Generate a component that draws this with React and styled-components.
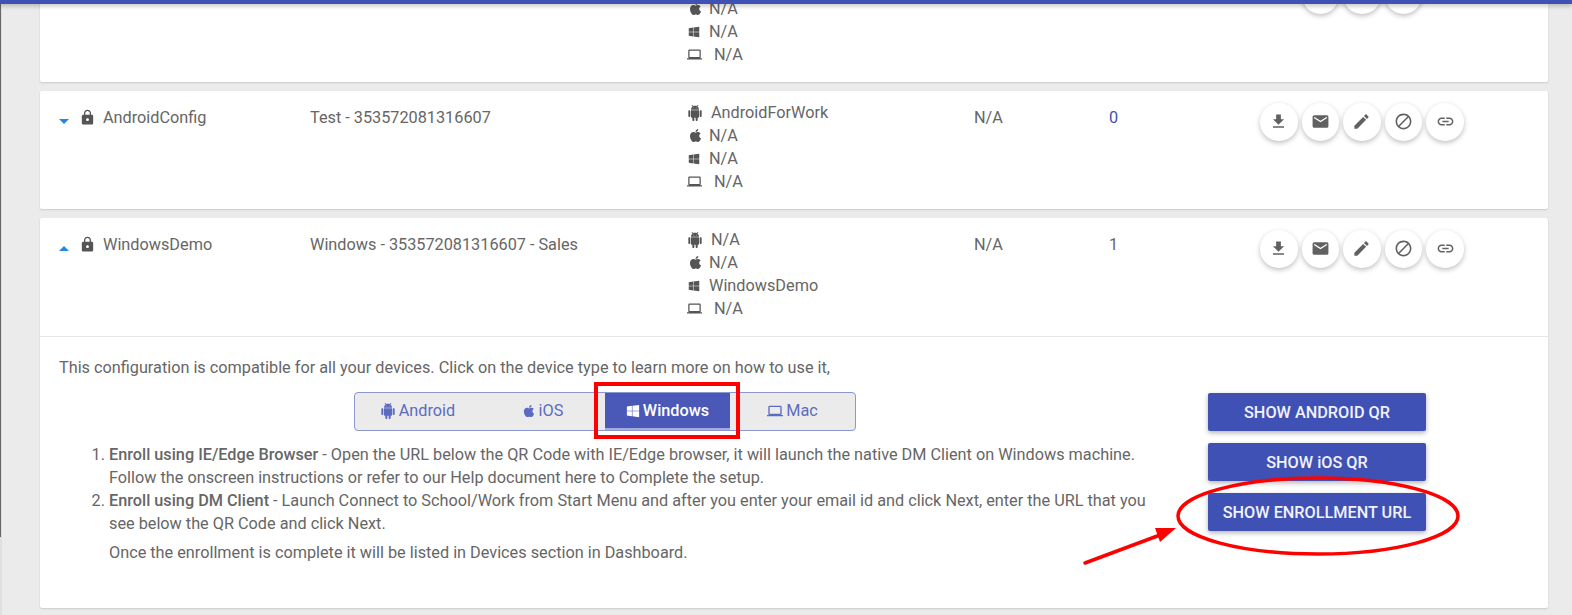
import React from 'react';
import styled, { createGlobalStyle } from 'styled-components';
import {
  MdArrowDropDown,
  MdArrowDropUp,
  MdBlock,
  MdEdit,
  MdEmail,
  MdFileDownload,
  MdLaptop,
  MdLink,
  MdLock,
} from 'react-icons/md';
import { FaApple, FaWindows } from 'react-icons/fa';

const GlobalStyle = createGlobalStyle`
  html, body {
    margin: 0;
    padding: 0;
    height: 615px;
    overflow: hidden;
    background: #ebebeb;
    font-family: 'Roboto', 'Liberation Sans', sans-serif;
    color: #666;
  }
`;

const Page = styled.div`
  position: relative;
  width: 1572px;
  height: 615px;
  overflow: hidden;
  background: #ebebeb;
`;

const TopBar = styled.div`
  position: absolute;
  top: 0;
  left: 0;
  right: 0;
  height: 4px;
  background: #3f51b5;
  box-shadow: 0 2px 4px rgba(0, 0, 0, 0.25);
  z-index: 3;
`;

const EdgeLine = styled.div`
  position: absolute;
  top: 0;
  left: 0;
  width: 1px;
  height: 615px;
  background: linear-gradient(#666 537px, #e0e0e0 537px);
  box-shadow: 1px 0 0 rgba(0, 0, 0, 0.05);
  z-index: 2;
`;

const List = styled.div`
  display: flex;
  flex-direction: column;
  gap: 9px;
  margin: -36px 24px 0 40px;
`;

const Card = styled.div`
  background: #fff;
  border-radius: 2px;
  box-shadow: 0 1px 2px rgba(0, 0, 0, 0.14);
`;

const Row = styled.div`
  display: grid;
  grid-template-columns: 252px 376px 288px 135px 151px auto;
  height: 118px;
  box-sizing: border-box;
  padding: 12px 0 0 18px;
  font-size: 16.25px;
  line-height: 23px;
`;

const NameCell = styled.div`
  display: flex;
  align-items: flex-start;
  height: 23px;
  margin-top: 3px;
`;

const Caret = styled.span`
  display: flex;
  width: 12px;
  height: 24px;
  color: #1e88e5;
  font-size: 24px;
  svg {
    flex: none;
    margin-left: -6px;
    margin-top: ${(p) => (p.$open ? '4px' : '3px')};
  }
`;

const LockIcon = styled(MdLock)`
  flex: none;
  font-size: 17px;
  margin: 3px 0 0 9px;
  color: #555;
`;

const Name = styled.span`
  margin-left: 7px;
`;

const TextCell = styled.div`
  margin-top: 3px;
`;

const CountCell = styled(TextCell)`
  color: ${(p) => (p.$link ? '#3f51b5' : '#666')};
`;

const Platforms = styled.div`
  display: flex;
  flex-direction: column;
  margin-top: -2px;
`;

const Platform = styled.div`
  display: flex;
  align-items: center;
  height: 23px;
  color: #666;
  gap: ${(p) => p.$gap}px;
  padding-left: ${(p) => p.$inset}px;
  svg {
    flex: none;
    fill: #555;
    color: #555;
    font-size: ${(p) => p.$size}px;
  }
`;

const Actions = styled.div`
  display: flex;
  gap: 4px;
  height: 38px;
`;

const RoundButton = styled.button`
  display: flex;
  align-items: center;
  justify-content: center;
  width: 37.6px;
  height: 37.6px;
  padding: 0;
  border: 0;
  border-radius: 50%;
  background: #fff;
  color: #616161;
  font-size: 19px;
  box-shadow: 0 2px 5px rgba(0, 0, 0, 0.25);
  visibility: ${(p) => (p.$hidden ? 'hidden' : 'visible')};
`;

const Divider = styled.div`
  height: 1px;
  background: #e6e6e6;
`;

const Detail = styled.div`
  display: flex;
  height: 271px;
  box-sizing: border-box;
  padding: 19px 0 0 19px;
`;

const DetailMain = styled.div`
  width: 1100px;
  font-size: 16.25px;
  line-height: 23px;
`;

const Intro = styled.p`
  margin: 0;
`;

const TabStrip = styled.div`
  display: flex;
  width: 502px;
  height: 39px;
  box-sizing: border-box;
  margin: 13px 0 0 295px;
  background: #ebebeb;
  border: 1px solid #8c97d0;
  border-radius: 4px;
`;

const Tab = styled.div`
  display: flex;
  align-items: center;
  justify-content: center;
  gap: 3px;
  width: 125px;
  background: ${(p) => (p.$active ? '#4a58b7' : 'transparent')};
  border-bottom: 2px solid ${(p) => (p.$active ? '#a3abdc' : 'transparent')};
  color: ${(p) => (p.$active ? '#fff' : '#5c6bc0')};
  font-size: 16.25px;
  font-weight: ${(p) => (p.$active ? 500 : 400)};
  svg {
    flex: none;
    fill: currentColor;
  }
`;

const Steps = styled.ol`
  margin: 12px 0 0;
  padding-left: 50px;
  b {
    font-weight: 500;
  }
`;

const Note = styled.p`
  margin: 6px 0 0 50px;
`;

const ButtonColumn = styled.div`
  display: flex;
  flex-direction: column;
  gap: 12px;
  width: 218px;
  margin: 37px 0 0 49px;
`;

const PrimaryButton = styled.button`
  height: 38px;
  padding: 0;
  border: 0;
  border-radius: 2px;
  background: #3f51b5;
  color: #f1f2fb;
  font: 500 16.25px 'Roboto', sans-serif;
  box-shadow: 0 2px 5px rgba(0, 0, 0, 0.3);
`;

const Annotations = styled.svg`
  position: absolute;
  inset: 0;
  z-index: 2;
  pointer-events: none;
`;

const AndroidIcon = ({ size = '1em' }) => (
  <svg width={size} height={size} viewBox="0 0 24 24">
    <path d="M6 18c0 .55.45 1 1 1h1v3.5c0 .83.67 1.5 1.5 1.5s1.5-.67 1.5-1.5V19h2v3.5c0 .83.67 1.5 1.5 1.5s1.5-.67 1.5-1.5V19h1c.55 0 1-.45 1-1V8H6v10zM3.5 8C2.67 8 2 8.67 2 9.5v7c0 .83.67 1.5 1.5 1.5S5 17.33 5 16.5v-7C5 8.67 4.33 8 3.5 8zm17 0c-.83 0-1.5.67-1.5 1.5v7c0 .83.67 1.5 1.5 1.5s1.5-.67 1.5-1.5v-7c0-.83-.67-1.5-1.5-1.5zm-4.97-5.84l1.3-1.3c.2-.2.2-.51 0-.71-.2-.2-.51-.2-.71 0l-1.48 1.48C13.85 1.23 12.95 1 12 1c-.96 0-1.86.23-2.66.63L7.85.15c-.2-.2-.51-.2-.71 0-.2.2-.2.51 0 .71l1.31 1.31C6.97 3.26 6 5.01 6 7h12c0-1.99-.97-3.75-2.47-4.84zM10 5H9V4h1v1zm5 0h-1V4h1v1z" />
  </svg>
);

const actionIcons = [MdFileDownload, MdEmail, MdEdit, MdBlock, MdLink];

const ActionGroup = ({ middleOnly }) => (
  <Actions>
    {actionIcons.map((Icon, i) => (
      <RoundButton key={i} $hidden={middleOnly && (i === 0 || i === 4)}>
        <Icon />
      </RoundButton>
    ))}
  </Actions>
);

const PlatformList = ({ android, ios, windows, mac }) => (
  <Platforms>
    <Platform $inset={1} $gap={8} $size={16}><AndroidIcon />{android}</Platform>
    <Platform $inset={2} $gap={6} $size={15}><FaApple />{ios}</Platform>
    <Platform $inset={2} $gap={9} $size={12}><FaWindows />{windows}</Platform>
    <Platform $inset={1} $gap={12} $size={15}><MdLaptop />{mac}</Platform>
  </Platforms>
);

const ConfigRow = ({ open, name, title, platforms, policy, count, link, middleOnly }) => (
  <Row>
    <NameCell>
      <Caret $open={open}>{open ? <MdArrowDropUp /> : <MdArrowDropDown />}</Caret>
      <LockIcon />
      <Name>{name}</Name>
    </NameCell>
    <TextCell>{title}</TextCell>
    <PlatformList {...platforms} />
    <TextCell>{policy}</TextCell>
    <CountCell $link={link}>{count}</CountCell>
    <ActionGroup middleOnly={middleOnly} />
  </Row>
);

export default function App() {
  return (
    <Page>
      <GlobalStyle />
      <TopBar />
      <EdgeLine />
      <List>
        <Card>
          <ConfigRow
            middleOnly
            platforms={{ android: 'N/A', ios: 'N/A', windows: 'N/A', mac: 'N/A' }}
          />
        </Card>
        <Card>
          <ConfigRow
            name="AndroidConfig"
            title="Test - 353572081316607"
            platforms={{ android: 'AndroidForWork', ios: 'N/A', windows: 'N/A', mac: 'N/A' }}
            policy="N/A"
            count="0"
            link
          />
        </Card>
        <Card>
          <ConfigRow
            open
            name="WindowsDemo"
            title="Windows - 353572081316607 - Sales"
            platforms={{ android: 'N/A', ios: 'N/A', windows: 'WindowsDemo', mac: 'N/A' }}
            policy="N/A"
            count="1"
          />
          <Divider />
          <Detail>
            <DetailMain>
              <Intro>
                This configuration is compatible for all your devices. Click on the device type to learn more on how to use it,
              </Intro>
              <TabStrip>
                <Tab><AndroidIcon size={16} />Android</Tab>
                <Tab><FaApple size={14} />iOS</Tab>
                <Tab $active><FaWindows size={14} />Windows</Tab>
                <Tab><MdLaptop size={16} />Mac</Tab>
              </TabStrip>
              <Steps>
                <li>
                  <b>Enroll using IE/Edge Browser</b> - Open the URL below the QR Code with IE/Edge browser, it will launch the native DM Client on Windows machine. Follow the onscreen instructions or refer to our Help document here to Complete the setup.
                </li>
                <li>
                  <b>Enroll using DM Client</b> - Launch Connect to School/Work from Start Menu and after you enter your email id and click Next, enter the URL that you see below the QR Code and click Next.
                </li>
              </Steps>
              <Note>Once the enrollment is complete it will be listed in Devices section in Dashboard.</Note>
            </DetailMain>
            <ButtonColumn>
              <PrimaryButton>SHOW ANDROID QR</PrimaryButton>
              <PrimaryButton>SHOW iOS QR</PrimaryButton>
              <PrimaryButton>SHOW ENROLLMENT URL</PrimaryButton>
            </ButtonColumn>
          </Detail>
        </Card>
      </List>
      <Annotations width="1572" height="615">
        <rect x="596" y="384" width="142" height="53" fill="none" stroke="#f00" strokeWidth="4" />
        <ellipse cx="1318" cy="516" rx="140" ry="38" fill="none" stroke="#f00" strokeWidth="3.5" />
        <path d="M1085 563 L1160 535" stroke="#f00" strokeWidth="3.5" strokeLinecap="round" />
        <path d="M1176 528 L1155 528 L1160 542 Z" fill="#f00" />
      </Annotations>
    </Page>
  );
}
